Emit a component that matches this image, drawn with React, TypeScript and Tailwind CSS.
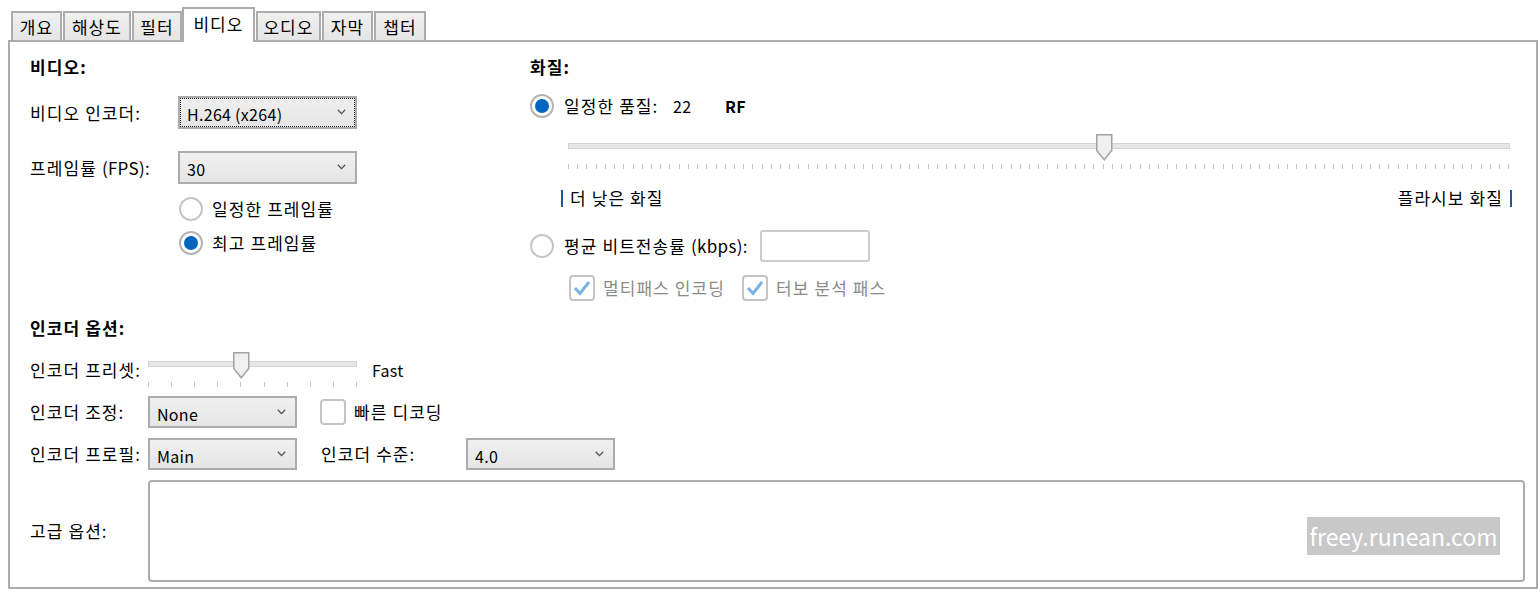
import React from "react";

const Chevron = () => (
  <svg width="9" height="6" viewBox="0 0 9 6" className="absolute right-[9px] top-[11px]">
    <polyline points="0.8,0.8 4.5,4.6 8.2,0.8" fill="none" stroke="#505050" strokeWidth="1.3" />
  </svg>
);

const Select = ({ value, w, focus }: { value: string; w: string; focus?: boolean }) => (
  <div
    className={`relative h-[33px] ${w} shrink-0 border-2 border-[#acacac] bg-gradient-to-b from-[#f0f0f0] to-[#e5e5e5] flex items-center pl-[7px] pt-[3px] text-[16px] tracking-[0.3px]`}
  >
    {focus && <span className="absolute inset-0 border border-dotted border-[#202020]" />}
    <span>{value}</span>
    <Chevron />
  </div>
);

const Radio = ({ checked }: { checked?: boolean }) => (
  <span
    className={`w-[24px] h-[24px] rounded-full border-2 shrink-0 flex items-center justify-center bg-white ${
      checked ? "border-[#b4b4b4]" : "border-[#c6c6c6]"
    }`}
  >
    {checked && <span className="w-[14px] h-[14px] rounded-full bg-[#0067c0]" />}
  </span>
);

const Check = ({ checked }: { checked?: boolean }) => (
  <span className="w-[26px] h-[26px] shrink-0 rounded-[4px] border-2 border-[#c4c4c4] bg-white flex items-center justify-center">
    {checked && (
      <svg width="20" height="18" viewBox="0 0 20 18">
        <polyline points="3,9 8,14.5 17,3" fill="none" stroke="#7ab2e3" strokeWidth="3" />
      </svg>
    )}
  </span>
);

const Thumb = ({ left }: { left: number }) => (
  <svg width="17" height="27" viewBox="0 0 17 27" className="absolute top-0" style={{ left }}>
    <polygon points="0.75,0.75 15.75,0.75 15.75,16.5 8.25,25.75 0.75,16.5" fill="#f0f0f0" stroke="#a2a2a2" strokeWidth="1.5" />
  </svg>
);

const Slider = ({ width, ticks, thumbLeft }: { width: number; ticks: number; thumbLeft: number }) => (
  <div className="relative h-[36px] shrink-0" style={{ width }}>
    <div className="pt-[9px]">
      <div className="h-[6px] border border-[#d4d4d4] bg-[#e7e7e7]" />
    </div>
    <div className="mt-[15px] flex justify-between">
      {Array.from({ length: ticks }).map((_, i) => (
        <span key={i} className="w-px h-[5px] bg-[#c4c4c4]" />
      ))}
    </div>
    <Thumb left={thumbLeft} />
  </div>
);

const tabs = [
  { t: "개요", w: "w-[51px]" },
  { t: "해상도", w: "w-[68px]" },
  { t: "필터", w: "w-[50px]" },
  { t: "비디오", w: "w-[73px]", sel: true },
  { t: "오디오", w: "w-[65px]" },
  { t: "자막", w: "w-[51px]" },
  { t: "챕터", w: "w-[52px]" },
];

export default function App() {
  return (
    <div className="w-[1540px] h-[595px] bg-white text-black text-[17px] tracking-[1.1px] leading-[20px] font-['Noto_Sans_CJK_KR','Noto_Sans',sans-serif] overflow-hidden">
      {/* tabs */}
      <div className="h-[40px] pl-[11px] flex items-end gap-[1px]">
        {tabs.map((tab) =>
          tab.sel ? (
            <div
              key={tab.t}
              className={`${tab.w} h-[35px] -mb-[2px] -ml-[1px] relative z-10 bg-white border-2 border-b-0 border-[#acacac] flex items-center justify-center pb-[4px]`}
            >
              {tab.t}
            </div>
          ) : (
            <div
              key={tab.t}
              className={`${tab.w} h-[29px] bg-gradient-to-b from-[#f0f0f0] to-[#e5e5e5] border-2 border-b-0 border-[#acacac] flex items-center justify-center`}
            >
              {tab.t}
            </div>
          )
        )}
      </div>

      {/* panel */}
      <div className="ml-[8px] w-[1530px] h-[549px] border-2 border-[#acacac] pl-[20px]">
        <div className="flex">
          {/* left column */}
          <div className="w-[500px] shrink-0">
            <div className="mt-[14px] h-[22px] flex items-center font-bold">비디오:</div>
            <div className="mt-[18px] h-[33px] flex items-center">
              <span className="w-[148px]">비디오 인코더:</span>
              <Select value="H.264 (x264)" w="w-[179px]" focus />
            </div>
            <div className="mt-[22px] h-[33px] flex items-center">
              <span className="w-[148px] whitespace-nowrap">
                프레임률 <span className="tracking-[0.3px]">(FPS):</span>
              </span>
              <Select value="30" w="w-[179px]" />
            </div>
            <div className="mt-[13px] h-[24px] pl-[149px] flex items-center gap-[9px]">
              <Radio />
              <span>일정한 프레임률</span>
            </div>
            <div className="mt-[10px] h-[24px] pl-[149px] flex items-center gap-[9px]">
              <Radio checked />
              <span>최고 프레임률</span>
            </div>
          </div>

          {/* right column */}
          <div className="w-[982px] shrink-0">
            <div className="mt-[14px] h-[22px] flex items-center font-bold">화질:</div>
            <div className="mt-[16px] h-[24px] flex items-center">
              <Radio checked />
              <span className="ml-[10px] w-[109px]">일정한 품질:</span>
              <span className="w-[52px] text-[16px] tracking-[0.3px]">22</span>
              <span className="font-bold text-[16px] tracking-[0.3px]">RF</span>
            </div>
            <div className="mt-[16px] ml-[38px]">
              <Slider width={942} ticks={103} thumbLeft={528} />
            </div>
            <div className="mt-[17px] h-[22px] ml-[31px] w-[951px] flex items-center justify-between">
              <span className="flex items-center gap-[7px]">
                <span className="w-[2px] h-[17px] bg-[#23569a]" />
                더 낮은 화질
              </span>
              <span className="flex items-center gap-[7px]">
                플라시보 화질
                <span className="w-[2px] h-[17px] bg-[#23569a]" />
              </span>
            </div>
            <div className="mt-[21px] h-[32px] flex items-center">
              <Radio />
              <span className="ml-[10px] w-[196px] whitespace-nowrap">
                평균 비트전송률 <span className="tracking-[0.3px]">(kbps):</span>
              </span>
              <span className="w-[110px] h-[32px] border-2 border-[#cccccc] rounded-[3px] bg-white" />
            </div>
            <div className="mt-[13px] h-[26px] pl-[39px] flex items-center text-[#8a8a8a]">
              <Check checked />
              <span className="ml-[8px] w-[139px] whitespace-nowrap">멀티패스 인코딩</span>
              <Check checked />
              <span className="ml-[8px]">터보 분석 패스</span>
            </div>
          </div>
        </div>

        {/* encoder options */}
        <div className="mt-[16px] h-[22px] flex items-center font-bold">인코더 옵션:</div>
        <div className="mt-[11px] h-[37px] flex items-start">
          <span className="w-[118px] mt-[10px] whitespace-nowrap">인코더 프리셋:</span>
          <div className="mt-[2px]">
            <Slider width={209} ticks={10} thumbLeft={85} />
          </div>
          <span className="ml-[15px] mt-[10px] text-[16px] tracking-[0.3px]">Fast</span>
        </div>
        <div className="mt-[9px] h-[32px] flex items-center">
          <span className="w-[118px]">인코더 조정:</span>
          <Select value="None" w="w-[149px] !h-[32px]" />
          <span className="ml-[23px]">
            <Check />
          </span>
          <span className="ml-[8px]">빠른 디코딩</span>
        </div>
        <div className="mt-[10px] h-[32px] flex items-center">
          <span className="w-[118px] whitespace-nowrap">인코더 프로필:</span>
          <Select value="Main" w="w-[149px] !h-[32px]" />
          <span className="ml-[24px] w-[145px]">인코더 수준:</span>
          <Select value="4.0" w="w-[149px] !h-[32px]" />
        </div>
        <div className="mt-[10px] h-[102px] flex items-center">
          <span className="w-[118px]">고급 옵션:</span>
          <div className="relative w-[1377px] h-[102px] border-2 border-[#acacac] rounded-[4px] bg-white">
            <div className="absolute right-[23px] top-[35px] w-[193px] h-[38px] bg-[#c8c8c8] text-white text-[23px] tracking-normal flex items-center justify-center whitespace-nowrap overflow-hidden">
              freey.runean.com
            </div>
          </div>
        </div>
      </div>
    </div>
  );
}
